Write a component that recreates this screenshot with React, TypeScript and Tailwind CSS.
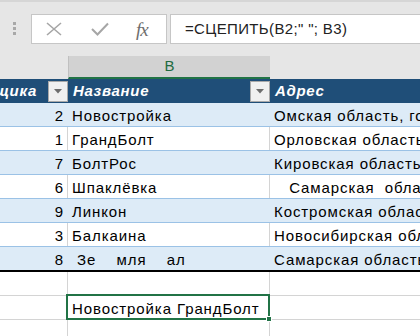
import React from 'react';

export default function App() {
  const rows = [
    { id: 2, name: 'Новостройка', addr: 'Омская область, город Омск, ул. Ленина' },
    { id: 1, name: 'ГрандБолт', addr: 'Орловская область, город Орёл' },
    { id: 7, name: 'БолтРос', addr: 'Кировская область, город Киров' },
    { id: 6, name: 'Шпаклёвка', addr: '   Самарская  область, город Самара' },
    { id: 9, name: 'Линкон', addr: 'Костромская область, город Кострома' },
    { id: 3, name: 'Балкаина', addr: 'Новосибирская область, город Новосибирск' },
    { id: 8, name: ' Зе    мля    ал', addr: 'Самарская область, город Тольятти' },
  ];

  return (
    <div className="w-[420px] h-[336px] overflow-hidden bg-white font-['Liberation_Sans',Arial,sans-serif] text-[15px] tracking-[0.9px] text-black">
      {/* Formula bar */}
      <div className="h-[56px] bg-[#e6e6e6] border-t-2 border-[#d6d6d6] flex items-start pt-[12px] tracking-normal">
        <div className="w-[31px] flex flex-col items-center gap-[2px] pt-[8px] pr-[3px]">
          <div className="w-[3px] h-[3px] bg-[#a8a8a8]" />
          <div className="w-[3px] h-[3px] bg-[#a8a8a8]" />
          <div className="w-[3px] h-[3px] bg-[#a8a8a8]" />
        </div>
        <div className="w-[136px] h-[30px] bg-white border border-[#c6c6c6] flex items-center">
          <svg className="ml-[14px]" width="16" height="14" viewBox="0 0 16 14">
            <path d="M1 1 L15 13 M15 1 L1 13" stroke="#a6a6a6" strokeWidth="1.6" fill="none" />
          </svg>
          <svg className="ml-[29px]" width="18" height="14" viewBox="0 0 18 14">
            <path d="M1 7 L6.5 12.5 L17 1.5" stroke="#a6a6a6" strokeWidth="2" fill="none" />
          </svg>
          <span className="ml-[27px] font-['Liberation_Serif',serif] italic text-[19px] text-[#6e6e6e] leading-none tracking-[-1px]">
            fx
          </span>
        </div>
        <div className="ml-[3px] flex-1 h-[30px] bg-white border border-[#c6c6c6] border-r-0 flex items-center pl-[14px] text-[15px] tracking-[0.35px] text-[#222]">
          {'=СЦЕПИТЬ(B2;" "; B3)'}
        </div>
      </div>

      {/* Column headers */}
      <div className="h-[23px] bg-[#e6e6e6] flex tracking-normal">
        <div className="w-[68px]" />
        <div className="w-[202px] bg-[#d2d2d2] border-l border-[#c0c0c0] border-b-2 border-b-[#217346] flex items-center justify-center text-[15px] text-[#1e6b40]">
          B
        </div>
      </div>

      {/* Table header */}
      <div className="h-[24px] bg-[#1f4e78] flex items-center text-white font-bold italic tracking-[0.7px]">
        <div className="w-[68px] h-full flex items-center">
          <div className="flex-1 overflow-hidden flex justify-end whitespace-nowrap pr-[11px]">Код поставщика</div>
          <FilterButton />
        </div>
        <div className="w-[202px] h-full flex items-center">
          <div className="flex-1 pl-[5px]">Название</div>
          <FilterButton />
        </div>
        <div className="flex-1 pl-[5px]">Адрес</div>
      </div>

      {/* Data rows */}
      {rows.map((r, i) => {
        const blue = i % 2 === 0;
        const last = i === rows.length - 1;
        return (
          <div
            key={i}
            className={`flex leading-[23px] whitespace-pre ${blue ? 'bg-[#ddebf7]' : 'bg-white'} ${
              last ? 'h-[25px] border-b-2 border-black' : 'h-[24px] border-b border-[#9bc2e6]'
            }`}
          >
            <div className={`w-[68px] text-right pr-[3px] pt-[1px] border-r ${blue ? 'border-transparent' : 'border-[#d4d4d4]'}`}>
              {r.id}
            </div>
            <div className={`w-[202px] pl-[4px] pt-[1px] border-r ${blue ? 'border-transparent' : 'border-[#d4d4d4]'}`}>
              {r.name}
            </div>
            <div className="flex-1 pl-[4px] pt-[1px] overflow-hidden">{r.addr}</div>
          </div>
        );
      })}

      {/* Empty grid rows */}
      <div className="h-[24px] flex border-b border-[#d4d4d4]">
        <div className="w-[68px] border-r border-[#d4d4d4]" />
        <div className="w-[202px] border-r border-[#d4d4d4]" />
      </div>
      <div className="h-[24px] flex border-b border-[#d4d4d4] leading-[23px]">
        <div className="w-[68px] border-r border-[#d4d4d4]" />
        <div className="w-[202px] border-r border-[#d4d4d4] relative pl-[4px] pt-[1px] whitespace-nowrap">
          Новостройка ГрандБолт
          <div className="absolute -left-[2px] -top-[2px] w-[204px] h-[26px] border-2 border-[#217346]" />
          <div className="absolute -right-[3px] -bottom-[3px] w-[6px] h-[6px] bg-[#217346] border border-white" />
        </div>
      </div>
      <div className="h-[24px] flex">
        <div className="w-[68px] border-r border-[#d4d4d4]" />
        <div className="w-[202px] border-r border-[#d4d4d4]" />
      </div>
    </div>
  );
}

function FilterButton() {
  return (
    <div className="w-[20px] h-[21px] bg-[#f0f0f0] border border-[#a9a9a9] flex items-center justify-center shrink-0">
      <svg width="8" height="5" viewBox="0 0 8 5">
        <path d="M0 0 L8 0 L4 4.5 Z" fill="#6d6d6d" />
      </svg>
    </div>
  );
}
